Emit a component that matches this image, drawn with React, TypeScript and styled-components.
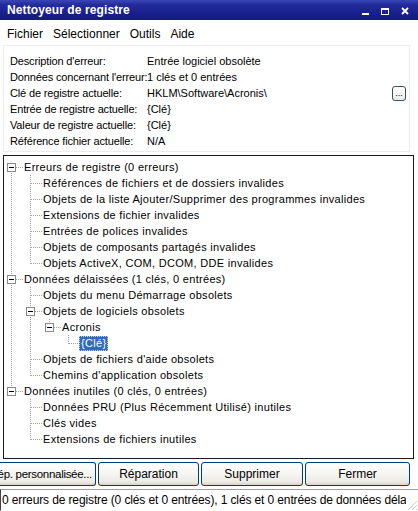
import React from 'react';
import styled, { createGlobalStyle } from 'styled-components';

const GlobalStyle = createGlobalStyle`
  html, body { margin: 0; padding: 0; background: #ffffff; overflow: hidden; }
  body { font-family: "Liberation Sans", Arial, sans-serif; font-size: 11px; color: #000; }
  * { box-sizing: border-box; }
`;

const Window = styled.div`
  width: 418px;
  height: 511px;
  display: flex;
  flex-direction: column;
  background: #ffffff;
  overflow: hidden;
`;

const TitleBar = styled.div`
  height: 20px;
  flex: none;
  display: flex;
  align-items: center;
  justify-content: space-between;
  padding: 0 9px 0 7px;
  background: linear-gradient(180deg, #3b45b6 0%, #232a9c 25%, #1a2190 60%, #141a7c 100%);
  color: #ffffff;
  font-weight: bold;
  font-size: 12px;
  letter-spacing: 0.1px;
`;

const TitleControls = styled.div`
  display: flex;
  align-items: center;
  gap: 12px;
`;

const MenuBar = styled.div`
  height: 25px;
  flex: none;
  display: flex;
  align-items: center;
  gap: 10px;
  padding: 2px 0 0 7px;
  font-size: 12px;
`;

const MenuItem = styled.span`
  color: #000;
`;

const InfoPanel = styled.div`
  flex: none;
  height: 107px;
  margin: 0 8px 0 3px;
  border: 1px solid #ececec;
  padding: 7px 0 0 6px;
  display: grid;
  grid-template-columns: 137px 1fr auto;
  grid-auto-rows: 16px;
  align-items: center;
`;

const InfoLabel = styled.span`
  white-space: nowrap;
  letter-spacing: -0.15px;
`;

const InfoValue = styled.span`
  white-space: nowrap;
`;

const DotsButton = styled.button`
  width: 14px;
  height: 15px;
  margin-right: 3px;
  border: 1px solid #3d4b66;
  border-radius: 3px;
  background: linear-gradient(180deg, #ffffff, #ecebe6);
  font-family: inherit;
  font-size: 9px;
  line-height: 9px;
  display: flex;
  align-items: flex-end;
  justify-content: center;
  padding: 0 0 2px 0;
`;

const TreeBox = styled.div`
  flex: none;
  height: 304px;
  margin: 3px 4px 0 3px;
  border: 1px solid #1a1a1a;
  background: #ffffff;
  padding-top: 3px;
  overflow: hidden;
`;

const TreeRow = styled.div`
  height: 16px;
  display: flex;
  align-items: center;
`;

const TreeLabel = styled.span<{ $selected?: boolean }>`
  height: 15px;
  line-height: 15px;
  padding: 0 2px;
  margin-left: -1px;
  white-space: nowrap;
  font-size: 11px;
  letter-spacing: 0.3px;
  color: ${(p) => (p.$selected ? '#ffffff' : '#000000')};
  background: ${(p) => (p.$selected ? '#316ac5' : 'transparent')};
  outline: ${(p) => (p.$selected ? '1px dotted #c9d4ec' : 'none')};
  outline-offset: -1px;
`;

const ButtonRow = styled.div`
  flex: none;
  height: 24px;
  margin-top: 3px;
  display: flex;
  gap: 2px;
`;

const ActionButton = styled.button<{ $w: number; $cut?: boolean }>`
  width: ${(p) => p.$w}px;
  height: 24px;
  flex: none;
  border: 1px solid #003c74;
  border-left-width: ${(p) => (p.$cut ? 0 : 1)}px;
  border-radius: ${(p) => (p.$cut ? '0 3px 3px 0' : '3px')};
  background: linear-gradient(180deg, #ffffff 0%, #f6f6f3 45%, #ecebe6 85%, #d8d4cb 100%);
  font-family: inherit;
  font-size: ${(p) => (p.$cut ? 11.5 : 12)}px;
  letter-spacing: ${(p) => (p.$cut ? '-0.3px' : '0')};
  color: #000;
  padding: ${(p) => (p.$cut ? '0 3px 0 0' : '0 3px')};
  overflow: hidden;
  white-space: nowrap;
  display: flex;
  align-items: center;
  justify-content: ${(p) => (p.$cut ? 'flex-end' : 'center')};
`;

const StatusBar = styled.div`
  flex: none;
  height: 22px;
  margin-top: 3px;
  display: flex;
  align-items: stretch;
`;

const StatusField = styled.div`
  flex: 1;
  border-top: 1px solid #a0a0a0;
  border-left: 1px solid #404040;
  border-bottom: 1px solid #ffffff;
  padding-left: 1px;
  font-size: 12px;
  letter-spacing: -0.12px;
  line-height: 20px;
  white-space: nowrap;
  overflow: hidden;
`;

const Grip = styled.div`
  width: 12px;
  flex: none;
  display: flex;
  align-items: flex-end;
  border-top: 1px solid #a0a0a0;
`;

type Node = { label: string; children?: Node[]; selected?: boolean };

const tree: Node[] = [
  {
    label: 'Erreurs de registre (0 erreurs)',
    children: [
      { label: 'Références de fichiers et de dossiers invalides' },
      { label: 'Objets de la liste Ajouter/Supprimer des programmes invalides' },
      { label: 'Extensions de fichier invalides' },
      { label: 'Entrées de polices invalides' },
      { label: 'Objets de composants partagés invalides' },
      { label: 'Objets ActiveX, COM, DCOM, DDE invalides' },
    ],
  },
  {
    label: 'Données délaissées (1 clés, 0 entrées)',
    children: [
      { label: 'Objets du menu Démarrage obsolets' },
      {
        label: 'Objets de logiciels obsolets',
        children: [{ label: 'Acronis', children: [{ label: '{Clé}', selected: true }] }],
      },
      { label: "Objets de fichiers d'aide obsolets" },
      { label: "Chemins d'application obsolets" },
    ],
  },
  {
    label: 'Données inutiles (0 clés, 0 entrées)',
    children: [
      { label: 'Données PRU (Plus Récemment Utilisé) inutiles' },
      { label: 'Clés vides' },
      { label: 'Extensions de fichiers inutiles' },
    ],
  },
];

type Flat = {
  label: string;
  selected?: boolean;
  guides: boolean[];
  first: boolean;
  last: boolean;
  hasChildren: boolean;
};

function flatten(nodes: Node[], guides: boolean[], depth: number, out: Flat[]) {
  nodes.forEach((n, i) => {
    const last = i === nodes.length - 1;
    out.push({
      label: n.label,
      selected: n.selected,
      guides,
      first: depth === 0 && i === 0,
      last,
      hasChildren: !!n.children,
    });
    if (n.children) flatten(n.children, [...guides, !last], depth + 1, out);
  });
  return out;
}

const rows = flatten(tree, [], 0, []);

const LINE = '#a0a0a0';

const Guide = ({ on }: { on: boolean }) => (
  <svg width="19" height="16" style={{ flex: 'none', display: 'block' }}>
    {on && <line x1="7.5" y1="0" x2="7.5" y2="16" stroke={LINE} strokeDasharray="1 1" />}
  </svg>
);

const Connector = ({ r }: { r: Flat }) => (
  <svg width="19" height="16" style={{ flex: 'none', display: 'block' }}>
    <line
      x1="7.5"
      y1={r.first ? 8 : 0}
      x2="7.5"
      y2={r.last ? 9 : 16}
      stroke={LINE}
      strokeDasharray="1 1"
    />
    <line x1="8" y1="8.5" x2="19" y2="8.5" stroke={LINE} strokeDasharray="1 1" />
    {r.hasChildren && (
      <g>
        <rect x="3.5" y="4.5" width="8" height="8" fill="#ffffff" stroke="#8a8a8a" />
        <line x1="5" y1="8.5" x2="10" y2="8.5" stroke="#000000" />
      </g>
    )}
  </svg>
);

const Minimize = () => (
  <svg width="7" height="12" viewBox="0 0 7 12">
    <rect x="0" y="9" width="7" height="2" fill="#ffffff" />
  </svg>
);
const Maximize = () => (
  <svg width="8" height="12" viewBox="0 0 8 12">
    <rect x="0.5" y="4.5" width="7" height="6" fill="none" stroke="#ffffff" strokeWidth="1" />
    <rect x="0" y="4" width="8" height="2" fill="#ffffff" />
  </svg>
);
const Close = () => (
  <svg width="8" height="12" viewBox="0 0 8 12">
    <path d="M1 4 L7 10 M7 4 L1 10" stroke="#ffffff" strokeWidth="1.8" />
  </svg>
);

const GripIcon = () => (
  <svg width="12" height="12" viewBox="0 0 12 12">
    <path d="M11 2 L2 11 M11 6 L6 11 M11 10 L10 11" stroke="#c8c8c8" strokeWidth="1" />
    <path d="M11 3 L3 11 M11 7 L7 11" stroke="#ffffff" strokeWidth="1" />
  </svg>
);

const info: [string, string][] = [
  ["Description d'erreur:", 'Entrée logiciel obsolète'],
  ["Données concernant l'erreur:", '1 clés et 0 entrées'],
  ['Clé de registre actuelle:', 'HKLM\\Software\\Acronis\\'],
  ['Entrée de registre actuelle:', '{Clé}'],
  ['Valeur de registre actuelle:', '{Clé}'],
  ['Référence fichier actuelle:', 'N/A'],
];

export default function App() {
  return (
    <>
      <GlobalStyle />
      <Window>
        <TitleBar>
          <span>Nettoyeur de registre</span>
          <TitleControls>
            <Minimize />
            <Maximize />
            <Close />
          </TitleControls>
        </TitleBar>
        <MenuBar>
          <MenuItem>Fichier</MenuItem>
          <MenuItem>Sélectionner</MenuItem>
          <MenuItem>Outils</MenuItem>
          <MenuItem>Aide</MenuItem>
        </MenuBar>
        <InfoPanel>
          {info.map(([l, v], i) => (
            <React.Fragment key={l}>
              <InfoLabel>{l}</InfoLabel>
              <InfoValue>{v}</InfoValue>
              {i === 2 ? <DotsButton>...</DotsButton> : <span />}
            </React.Fragment>
          ))}
        </InfoPanel>
        <TreeBox>
          {rows.map((r, i) => (
            <TreeRow key={i}>
              {r.guides.map((g, j) => (
                <Guide key={j} on={g} />
              ))}
              <Connector r={r} />
              <TreeLabel $selected={r.selected}>{r.label}</TreeLabel>
            </TreeRow>
          ))}
        </TreeBox>
        <ButtonRow>
          <ActionButton $w={96} $cut>
            Rép. personnalisée...
          </ActionButton>
          <ActionButton $w={101}>Réparation</ActionButton>
          <ActionButton $w={102}>Supprimer</ActionButton>
          <ActionButton $w={105}>Fermer</ActionButton>
        </ButtonRow>
        <StatusBar>
          <StatusField>
            0 erreurs de registre (0 clés et 0 entrées), 1 clés et 0 entrées de données délaissées, 0 clés et 0 entrées de données inutiles
          </StatusField>
          <Grip>
            <GripIcon />
          </Grip>
        </StatusBar>
      </Window>
    </>
  );
}
